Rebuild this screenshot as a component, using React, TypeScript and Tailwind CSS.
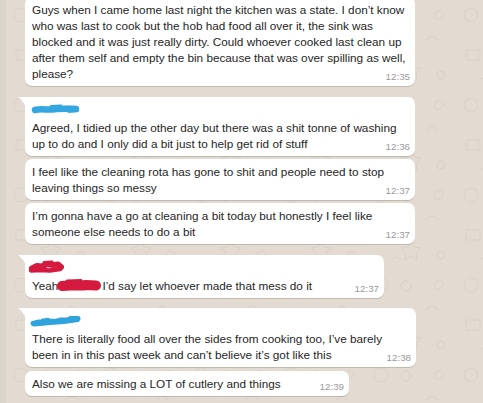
import React from "react";

const Tail = () => (
  <svg className="absolute left-[-7px] top-0" width="8" height="10" viewBox="0 0 8 10">
    <path d="M0 0 L8 0 L8 10 C6 6 3 2 0 0 Z" fill="#ffffff" />
  </svg>
);

const BlueName1 = () => (
  <svg width="50" height="12" viewBox="0 0 50 12" className="block">
    <path d="M4 7 C10 5.5 16 7 22 6.5 S32 5 40 6 L45 6" stroke="#34a7e0" strokeWidth="6.5" strokeLinecap="round" fill="none" />
    <path d="M36 2.5 L46 3 L47.5 9 L37 10 Z" fill="#34a7e0" />
    <path d="M20 3.5 L30 3" stroke="#34a7e0" strokeWidth="3" strokeLinecap="round" />
  </svg>
);

const BlueName2 = () => (
  <svg width="52" height="12" viewBox="0 0 52 12" className="block">
    <path d="M3 8.5 L9 7 L13 8 L19 6 L25 6.5 L31 5 L37 5 L43 3.5 L48 3.5" stroke="#2ea3dc" strokeWidth="5" strokeLinecap="round" strokeLinejoin="round" fill="none" />
    <path d="M4 10 L20 8.5 L34 7.5 L48 5.5" stroke="#2ea3dc" strokeWidth="3" strokeLinecap="round" fill="none" />
    <path d="M39 1 L49 1.5 L49 6.5 L40 7 Z" fill="#2ea3dc" />
    <path d="M12 5 L18 4" stroke="#2ea3dc" strokeWidth="2.5" strokeLinecap="round" />
  </svg>
);

const RedName = () => (
  <svg width="36" height="14" viewBox="0 0 36 14" className="block">
    <path d="M4 8.5 L9 6 L14 6.5 L19 4 L25 5 L30 4.5 L33 7" stroke="#d41a3f" strokeWidth="6" strokeLinecap="round" strokeLinejoin="round" fill="none" />
    <path d="M3 10.5 L12 10 L22 10.5 L32 9" stroke="#d41a3f" strokeWidth="4.5" strokeLinecap="round" fill="none" />
    <path d="M16 2.5 L24 2" stroke="#d41a3f" strokeWidth="3" strokeLinecap="round" />
  </svg>
);

const RedRedact = () => (
  <svg width="44" height="13" viewBox="0 0 44 13" className="inline-block align-[-2px] ml-[-1px] mr-[1px]">
    <path d="M5 7 C12 5.5 22 7.5 30 6 L39 6.5" stroke="#d41a3f" strokeWidth="10" strokeLinecap="round" fill="none" />
    <path d="M10 2 L24 1.5" stroke="#d41a3f" strokeWidth="3" strokeLinecap="round" />
  </svg>
);

type BubbleProps = {
  tail?: boolean;
  name?: React.ReactNode;
  lines: React.ReactNode[];
  time: string;
  w: string;
};

const Bubble = ({ tail, name, lines, time, w }: BubbleProps) => (
  <div
    className={`relative bg-white ${tail ? "rounded-[7px] rounded-tl-none" : "rounded-[7px]"} pl-[7px] pr-[5px] pt-[5px] pb-[4px] shadow-[0_1px_0.5px_rgba(0,0,0,0.15)] ${w}`}
  >
    {tail && <Tail />}
    {name && <div className="h-[18px]">{name}</div>}
    <div className="text-[11.75px] leading-[16px] text-[#262626] whitespace-nowrap">
      {lines.map((l, i) => (
        <div key={i}>{l}</div>
      ))}
    </div>
    <span className="absolute right-[5px] bottom-[3px] text-[9.75px] leading-[12px] text-[#9a9a9a]">
      {time}
    </span>
  </div>
);

const Pattern = () => (
  <svg className="absolute inset-0" width="100%" height="100%">
    <defs>
      <pattern id="doodle" width="90" height="90" patternUnits="userSpaceOnUse">
        <g stroke="#d5ccc0" strokeWidth="1" fill="none" opacity="0.75">
          <circle cx="15" cy="15" r="7" />
          <path d="M40 10 l6 6 l-6 6 l-6 -6 z" />
          <path d="M60 40 q6 -8 12 0" />
          <rect x="10" y="50" width="14" height="10" rx="2" />
          <path d="M45 60 l3 7 l7 1 l-5 5 l1 7 l-6 -4 l-6 4 l1 -7 l-5 -5 l7 -1 z" />
          <circle cx="75" cy="75" r="4" />
          <path d="M70 12 c4 -4 10 0 6 5 c-4 5 -10 2 -6 -5" />
          <path d="M25 80 q5 -6 10 0" />
        </g>
      </pattern>
    </defs>
    <rect width="100%" height="100%" fill="url(#doodle)" />
  </svg>
);

export default function App() {
  return (
    <div className="w-[483px] h-[403px] overflow-hidden flex bg-[#e3dbd1] font-['Liberation_Sans',Arial,sans-serif]">
      <div className="w-[6px] bg-[#dbd4cb]" />
      <div className="relative flex-1">
        <Pattern />
        <div className="relative flex flex-col items-start pl-[19px] mt-[-3px]">
          <Bubble
            w="w-[390px]"
            lines={[
              "Guys when I came home last night the kitchen was a state. I don’t know",
              "who was last to cook but the hob had food all over it, the sink was",
              "blocked and it was just really dirty. Could whoever cooked last clean up",
              "after them self and empty the bin because that was over spilling as well,",
              "please?",
            ]}
            time="12:35"
          />
          <div className="h-[11px]" />
          <Bubble
            tail
            w="w-[390px]"
            name={<div className="pt-[1px] ml-[-1px]"><BlueName1 /></div>}
            lines={[
              "Agreed, I tidied up the other day but there was a shit tonne of washing",
              "up to do and I only did a bit just to help get rid of stuff",
            ]}
            time="12:36"
          />
          <div className="h-[3px]" />
          <Bubble
            w="w-[390px]"
            lines={[
              "I feel like the cleaning rota has gone to shit and people need to stop",
              "leaving things so messy",
            ]}
            time="12:37"
          />
          <div className="h-[3px]" />
          <Bubble
            w="w-[390px]"
            lines={[
              "I’m gonna have a go at cleaning a bit today but honestly I feel like",
              "someone else needs to do a bit",
            ]}
            time="12:37"
          />
          <div className="h-[11px]" />
          <Bubble
            tail
            w="w-[359px]"
            name={<div className="ml-[-4px]"><RedName /></div>}
            lines={[
              <span key="y">
                Yeah<RedRedact />I’d say let whoever made that mess do it
              </span>,
            ]}
            time="12:37"
          />
          <div className="h-[10px]" />
          <Bubble
            tail
            w="w-[391px]"
            name={<div className="pt-[2px] ml-[-2px]"><BlueName2 /></div>}
            lines={[
              "There is literally food all over the sides from cooking too, I’ve barely",
              "been in in this past week and can’t believe it’s got like this",
            ]}
            time="12:38"
          />
          <div className="h-[4px]" />
          <Bubble
            w="w-[324px]"
            lines={["Also we are missing a LOT of cutlery and things"]}
            time="12:39"
          />
        </div>
      </div>
    </div>
  );
}
